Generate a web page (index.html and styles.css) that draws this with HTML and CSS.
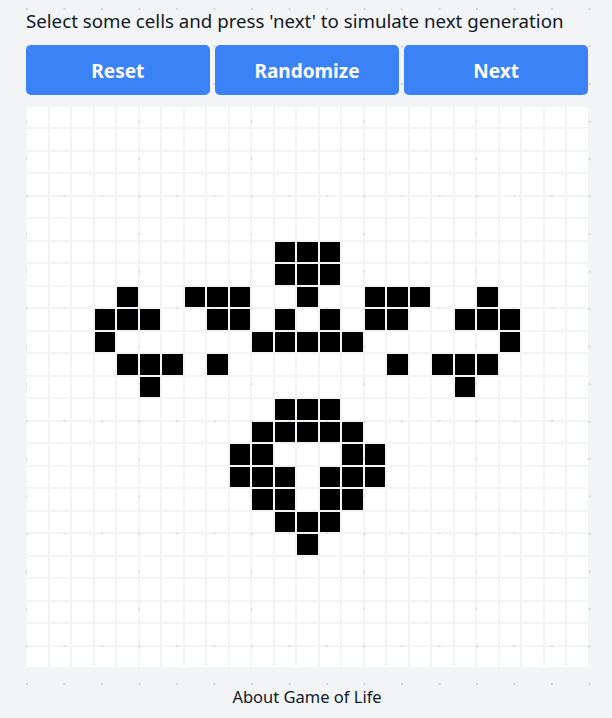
FILE: index.html
```html
<!DOCTYPE html>
<html lang="en">
<head>
<meta charset="utf-8">
<title>Game of Life</title>
<link rel="stylesheet" href="styles.css">
</head>
<body>
<main class="app">
  <p class="hint">Select some cells and press 'next' to simulate next generation</p>
  <div class="controls">
    <button class="btn">Reset</button>
    <button class="btn">Randomize</button>
    <button class="btn">Next</button>
  </div>
  <div class="grid">
<i></i><i></i><i></i><i></i><i></i><i></i><i></i><i></i><i></i><i></i><i></i><i></i><i></i><i></i><i></i><i></i><i></i><i></i><i></i><i></i><i></i><i></i><i></i><i></i><i></i>
<i></i><i></i><i></i><i></i><i></i><i></i><i></i><i></i><i></i><i></i><i></i><i></i><i></i><i></i><i></i><i></i><i></i><i></i><i></i><i></i><i></i><i></i><i></i><i></i><i></i>
<i></i><i></i><i></i><i></i><i></i><i></i><i></i><i></i><i></i><i></i><i></i><i></i><i></i><i></i><i></i><i></i><i></i><i></i><i></i><i></i><i></i><i></i><i></i><i></i><i></i>
<i></i><i></i><i></i><i></i><i></i><i></i><i></i><i></i><i></i><i></i><i></i><i></i><i></i><i></i><i></i><i></i><i></i><i></i><i></i><i></i><i></i><i></i><i></i><i></i><i></i>
<i></i><i></i><i></i><i></i><i></i><i></i><i></i><i></i><i></i><i></i><i></i><i></i><i></i><i></i><i></i><i></i><i></i><i></i><i></i><i></i><i></i><i></i><i></i><i></i><i></i>
<i></i><i></i><i></i><i></i><i></i><i></i><i></i><i></i><i></i><i></i><i></i><i></i><i></i><i></i><i></i><i></i><i></i><i></i><i></i><i></i><i></i><i></i><i></i><i></i><i></i>
<i></i><i></i><i></i><i></i><i></i><i></i><i></i><i></i><i></i><i></i><i></i><i class="on"></i><i class="on"></i><i class="on"></i><i></i><i></i><i></i><i></i><i></i><i></i><i></i><i></i><i></i><i></i><i></i>
<i></i><i></i><i></i><i></i><i></i><i></i><i></i><i></i><i></i><i></i><i></i><i class="on"></i><i class="on"></i><i class="on"></i><i></i><i></i><i></i><i></i><i></i><i></i><i></i><i></i><i></i><i></i><i></i>
<i></i><i></i><i></i><i></i><i class="on"></i><i></i><i></i><i class="on"></i><i class="on"></i><i class="on"></i><i></i><i></i><i class="on"></i><i></i><i></i><i class="on"></i><i class="on"></i><i class="on"></i><i></i><i></i><i class="on"></i><i></i><i></i><i></i><i></i>
<i></i><i></i><i></i><i class="on"></i><i class="on"></i><i class="on"></i><i></i><i></i><i class="on"></i><i class="on"></i><i></i><i class="on"></i><i></i><i class="on"></i><i></i><i class="on"></i><i class="on"></i><i></i><i></i><i class="on"></i><i class="on"></i><i class="on"></i><i></i><i></i><i></i>
<i></i><i></i><i></i><i class="on"></i><i></i><i></i><i></i><i></i><i></i><i></i><i class="on"></i><i class="on"></i><i class="on"></i><i class="on"></i><i class="on"></i><i></i><i></i><i></i><i></i><i></i><i></i><i class="on"></i><i></i><i></i><i></i>
<i></i><i></i><i></i><i></i><i class="on"></i><i class="on"></i><i class="on"></i><i></i><i class="on"></i><i></i><i></i><i></i><i></i><i></i><i></i><i></i><i class="on"></i><i></i><i class="on"></i><i class="on"></i><i class="on"></i><i></i><i></i><i></i><i></i>
<i></i><i></i><i></i><i></i><i></i><i class="on"></i><i></i><i></i><i></i><i></i><i></i><i></i><i></i><i></i><i></i><i></i><i></i><i></i><i></i><i class="on"></i><i></i><i></i><i></i><i></i><i></i>
<i></i><i></i><i></i><i></i><i></i><i></i><i></i><i></i><i></i><i></i><i></i><i class="on"></i><i class="on"></i><i class="on"></i><i></i><i></i><i></i><i></i><i></i><i></i><i></i><i></i><i></i><i></i><i></i>
<i></i><i></i><i></i><i></i><i></i><i></i><i></i><i></i><i></i><i></i><i class="on"></i><i class="on"></i><i class="on"></i><i class="on"></i><i class="on"></i><i></i><i></i><i></i><i></i><i></i><i></i><i></i><i></i><i></i><i></i>
<i></i><i></i><i></i><i></i><i></i><i></i><i></i><i></i><i></i><i class="on"></i><i class="on"></i><i></i><i></i><i></i><i class="on"></i><i class="on"></i><i></i><i></i><i></i><i></i><i></i><i></i><i></i><i></i><i></i>
<i></i><i></i><i></i><i></i><i></i><i></i><i></i><i></i><i></i><i class="on"></i><i class="on"></i><i class="on"></i><i></i><i class="on"></i><i class="on"></i><i class="on"></i><i></i><i></i><i></i><i></i><i></i><i></i><i></i><i></i><i></i>
<i></i><i></i><i></i><i></i><i></i><i></i><i></i><i></i><i></i><i></i><i class="on"></i><i class="on"></i><i></i><i class="on"></i><i class="on"></i><i></i><i></i><i></i><i></i><i></i><i></i><i></i><i></i><i></i><i></i>
<i></i><i></i><i></i><i></i><i></i><i></i><i></i><i></i><i></i><i></i><i></i><i class="on"></i><i class="on"></i><i class="on"></i><i></i><i></i><i></i><i></i><i></i><i></i><i></i><i></i><i></i><i></i><i></i>
<i></i><i></i><i></i><i></i><i></i><i></i><i></i><i></i><i></i><i></i><i></i><i></i><i class="on"></i><i></i><i></i><i></i><i></i><i></i><i></i><i></i><i></i><i></i><i></i><i></i><i></i>
<i></i><i></i><i></i><i></i><i></i><i></i><i></i><i></i><i></i><i></i><i></i><i></i><i></i><i></i><i></i><i></i><i></i><i></i><i></i><i></i><i></i><i></i><i></i><i></i><i></i>
<i></i><i></i><i></i><i></i><i></i><i></i><i></i><i></i><i></i><i></i><i></i><i></i><i></i><i></i><i></i><i></i><i></i><i></i><i></i><i></i><i></i><i></i><i></i><i></i><i></i>
<i></i><i></i><i></i><i></i><i></i><i></i><i></i><i></i><i></i><i></i><i></i><i></i><i></i><i></i><i></i><i></i><i></i><i></i><i></i><i></i><i></i><i></i><i></i><i></i><i></i>
<i></i><i></i><i></i><i></i><i></i><i></i><i></i><i></i><i></i><i></i><i></i><i></i><i></i><i></i><i></i><i></i><i></i><i></i><i></i><i></i><i></i><i></i><i></i><i></i><i></i>
<i></i><i></i><i></i><i></i><i></i><i></i><i></i><i></i><i></i><i></i><i></i><i></i><i></i><i></i><i></i><i></i><i></i><i></i><i></i><i></i><i></i><i></i><i></i><i></i><i></i>
  </div>
  <p class="about">About Game of Life</p>
</main>
</body>
</html>
```

FILE: styles.css
```css
html {
  background-color: #f3f4f6;
  background-image: radial-gradient(circle at center, #d6d8dc 1.3px, transparent 1.6px);
  background-size: 37.5px 37.5px;
  background-position: 8.25px -9.75px;
  min-height: 100%;
}

body {
  margin: 0;
  font-family: "Noto Sans", "Open Sans", sans-serif;
  color: #111827;
}

.app {
  width: 562px;
  margin-left: 26px;
  padding-top: 7px;
}

.hint {
  margin: 0;
  font-size: 18.7px;
  line-height: 28px;
  white-space: nowrap;
}

.controls {
  display: flex;
  gap: 5.5px;
  margin-top: 10px;
}

.btn {
  flex: 1;
  height: 50px;
  border: 0;
  border-radius: 5px;
  background: #3b82f6;
  color: #fff;
  font-family: "Noto Sans", "Open Sans", sans-serif;
  font-weight: 700;
  font-size: 19px;
  padding: 2px 0 0;
}

.grid {
  display: grid;
  grid-template-columns: repeat(25, 1fr);
  grid-template-rows: repeat(25, 1fr);
  gap: 2px;
  height: 560px;
  margin: 12px 0 0 1px;
  width: 561px;
}

.grid i {
  display: block;
  background: #fff;
}

.grid i.on {
  background: #000;
}

.about {
  margin: 16px 0 0;
  text-align: center;
  font-size: 16.5px;
  line-height: 28px;
}
```
